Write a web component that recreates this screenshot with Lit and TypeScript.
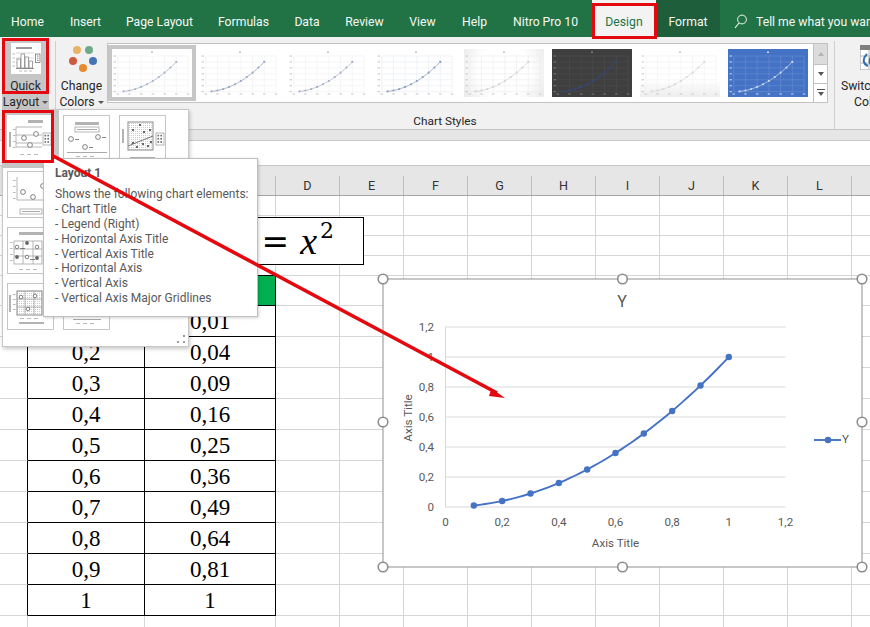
import { LitElement, html, css, svg } from "lit";
import { customElement } from "lit/decorators.js";

const TABS = ["Home", "Insert", "Page Layout", "Formulas", "Data", "Review", "View", "Help", "Nitro Pro 10"];
const COLS = ["", "", "", "D", "E", "F", "G", "H", "I", "J", "K", "L"];
const ROWS: [string, string][] = [
  ["0,1", "0,01"], ["0,2", "0,04"], ["0,3", "0,09"], ["0,4", "0,16"], ["0,5", "0,25"],
  ["0,6", "0,36"], ["0,7", "0,49"], ["0,8", "0,64"], ["0,9", "0,81"], ["1", "1"],
];
const XS = [0.1, 0.2, 0.3, 0.4, 0.5, 0.6, 0.7, 0.8, 0.9, 1];
const TIP = ["- Chart Title", "- Legend (Right)", "- Horizontal Axis Title", "- Vertical Axis Title", "- Horizontal Axis", "- Vertical Axis", "- Vertical Axis Major Gridlines"];

const THUMBS = [
  { cls: "", grid: "#eeeeee", line: "#aebbce", pt: "#a9b7cc", tick: "#c2c2c2" },
  { cls: "", grid: "#eeeeee", line: "#9aaac4", pt: "#9aaac4", tick: "#c2c2c2" },
  { cls: "", grid: "#eeeeee", line: "#b4bfd0", pt: "#a3b0c6", tick: "#c2c2c2" },
  { cls: "", grid: "#e8ebf1", line: "#9aaac8", pt: "#8d9fc0", tick: "#c2c2c2" },
  { cls: "t-soft", grid: "#ebebeb", line: "#d8d8d8", pt: "#d4d4d4", tick: "#c6c6c6" },
  { cls: "t-dark", grid: "#4e4e4e", line: "#31497c", pt: "#31497c", tick: "#7e7e7e" },
  { cls: "t-fade", grid: "#f0f0f0", line: "#dcdcdc", pt: "#d8d8d8", tick: "#c8c8c8" },
  { cls: "t-blue", grid: "#6a8fd2", line: "#b9caeb", pt: "#cbd8f2", tick: "#d0dcf3" },
];

function curve(px: (x: number) => number, py: (y: number) => number) {
  let d = "";
  for (let x = 0.1; x <= 1.0001; x += 0.02) {
    d += `${d ? "L" : "M"}${px(x).toFixed(2)} ${py(x * x).toFixed(2)}`;
  }
  return d;
}

function thumb(t: (typeof THUMBS)[number]) {
  const px = (x: number) => 5.7 + (x / 1.2) * 70.3;
  const py = (y: number) => 42.7 - (y / 1.2) * 35.7;
  const ticks = [0, 0.2, 0.4, 0.6, 0.8, 1, 1.2];
  return svg`<svg class="thumb ${t.cls}" width="80" height="48" viewBox="0 0 80 48">
    <rect x="39" y="2.5" width="2" height="1.5" fill=${t.tick}></rect>
    ${ticks.map((v) => svg`
      <line x1="5.7" x2="76" y1=${py(v)} y2=${py(v)} stroke=${t.grid} stroke-width=".6"></line>
      <line x1=${px(v)} x2=${px(v)} y1="7" y2="42.7" stroke=${t.grid} stroke-width=".6"></line>
      <rect x="1.5" y=${py(v) - 0.5} width="2.5" height="1" fill=${t.tick}></rect>
      <rect x=${px(v) - 1.2} y="44.5" width="2.5" height="1" fill=${t.tick}></rect>`)}
    <path d=${curve(px, py)} fill="none" stroke=${t.line} stroke-width=".9"></path>
    ${XS.map((x) => svg`<circle cx=${px(x)} cy=${py(x * x)} r="1.1" fill=${t.pt}></circle>`)}
  </svg>`;
}

const dash = (x: number, y: number, n = 3, w = 4, g = 3) =>
  Array.from({ length: n }, (_, i) => svg`<rect class="f-m" x=${x + i * (w + g)} y=${y} width=${w} height=".8"></rect>`);
const ticksL = (x: number, y: number, n = 4, g = 6) =>
  Array.from({ length: n }, (_, i) => svg`<rect class="f-m" x=${x} y=${y + i * g} width="2.6" height=".8"></rect>`);
const ring = (x: number, y: number, r = 2.4) => svg`<circle class="ring" cx=${x} cy=${y} r=${r}></circle>`;
const legendBox = (x: number, y: number, w: number, h: number) => svg`
  <rect class="ln" x=${x} y=${y} width=${w} height=${h}></rect>
  ${[0, 1, 2].map((i) => svg`
    <rect class="f-d" x=${x + 1.5} y=${y + 1.8 + i * 3.2} width="1.6" height="1.6"></rect>
    <rect class="f-d" x=${x + 4.4} y=${y + 1.8 + i * 3.2} width="1.6" height="1.6"></rect>`)}`;
const dots = svg`<pattern id="dots" width="2" height="2" patternUnits="userSpaceOnUse"><rect width="1" height="1" fill="#cdcdcd"></rect></pattern>`;

const TILES = [
  svg`<rect class="f-b" x="21" y="5" width="15" height="3"></rect>
    <rect class="f-b" x="2" y="17" width="2" height="15"></rect>
    ${ticksL(6, 14)}
    <path class="ln" d="M9 12H35M9 20H35M9 28H35M9 12V32H35"></path>
    ${ring(17, 23)}${ring(29, 19)}${ring(23, 30)}
    ${legendBox(36, 18, 8, 12)}${dash(13, 39)}`,
  svg`<rect class="f-b" x="12" y="7" width="24" height="3"></rect>
    <rect class="ln" x="12" y="12" width="24" height="5"></rect>
    <rect class="f-m" x="14" y="14" width="20" height="1"></rect>
    ${ring(8, 24)}<rect class="f-d" x="12" y="24" width="4" height=".8"></rect>
    ${ring(35, 22)}<rect class="f-d" x="39" y="22" width="4" height=".8"></rect>
    ${ring(22, 32)}<rect class="f-d" x="26" y="32" width="4" height=".8"></rect>
    <rect class="f-m" x="4" y="37" width="40" height="1"></rect>${dash(13, 41)}`,
  svg`${dots}<rect x="9" y="7" width="25" height="28" fill="url(#dots)" stroke="#8a8a8a"></rect>
    <path d="M9 31L34 21" stroke="#777" fill="none"></path>
    ${[[13, 14], [20, 9], [24, 16], [30, 14], [13, 27], [17, 31], [23, 28], [28, 30], [31, 26]].map(([x, y]) => svg`<rect class="f-d" x=${x} y=${y} width="2" height="2"></rect>`)}
    <rect class="f-b" x="3" y="14" width="2" height="14"></rect>
    ${legendBox(37, 18, 8, 12)}<rect class="f-b" x="11" y="42" width="25" height="3"></rect>`,
  svg`${ticksL(6, 9, 4, 6)}<path class="ln" d="M10 6V29H36"></path>
    ${ring(16, 21)}${ring(26, 26)}${ring(36, 15)}
    <rect class="ln" x="13" y="38" width="22" height="5"></rect><rect class="f-m" x="15" y="40" width="18" height="1"></rect>`,
  svg``,
  svg``,
  svg`<rect class="f-b" x="12" y="5" width="25" height="3"></rect>
    ${ticksL(3, 15, 4, 6)}
    <rect class="ln" x="7" y="14" width="28" height="23"></rect>
    <path class="ln" d="M7 22H35M7 29H35M16 14V37M26 14V37"></path>
    ${ring(10, 20, 1.8)}${ring(30, 20, 1.8)}${ring(20, 30, 1.8)}
    <circle class="f-d" cx="20" cy="16" r="1.9"></circle><circle class="f-d" cx="10" cy="30" r="1.9"></circle><circle class="f-d" cx="30" cy="31" r="1.9"></circle>
    <rect class="f-d" x="13" y="21" width="5" height=".8"></rect><rect class="f-d" x="23" y="32" width="5" height=".8"></rect>
    ${dash(12, 42)}`,
  svg``,
  svg``,
  svg`${dots}<rect class="f-b" x="2" y="12" width="2" height="17"></rect>
    ${ticksL(6, 11, 4, 5)}
    <rect x="10" y="8" width="25" height="24" fill="url(#dots)" stroke="#8a8a8a"></rect>
    <path class="ln" d="M10 16H35M10 24H35M18 8V32M27 8V32"></path>
    ${ring(14, 14, 1.8)}${ring(28, 13, 1.8)}${ring(21, 26, 1.8)}
    ${dash(13, 35)}<rect class="f-b" x="12" y="39" width="25" height="2"></rect>`,
  svg`${dash(13, 40)}<rect class="f-m" x="10" y="36" width="28" height="1"></rect>`,
];

@customElement("app-root")
export class AppRoot extends LitElement {
  static styles = css`
    :host {
      display: block; position: relative; width: 870px; height: 627px; overflow: hidden;
      font-family: Roboto, "Open Sans", "Liberation Sans", sans-serif; background: #fff; color: #262626;
    }
    .tabs {
      height: 37px; background: #217346; color: #f4f8f5; font-size: 12.2px;
      display: grid; grid-template-columns: 55px 61px 87px 81px 46px 69px 47px 57px 85px 4px 64px 64px 1fr;
      align-items: stretch;
    }
    .tab { display: flex; align-items: center; justify-content: center; padding-top: 6px; white-space: nowrap; }
    .ctx { background: #1e5e3a; }
    .design { background: #f3f3f3; color: #217346; position: relative; }
    .design::after {
      content: ""; position: absolute; left: 0; right: -1px; top: 3px; bottom: -2px;
      border: 3px solid #e3090e; box-sizing: border-box;
    }
    .search { display: flex; align-items: center; gap: 9px; padding: 6px 0 0 14px; white-space: nowrap; font-size: 12.2px; }
    .ribbon {
      height: 93px; box-sizing: border-box; background: #f1f1f1; border-bottom: 1px solid #c4c4c4;
      display: flex; align-items: flex-start; font-size: 12.2px; color: #262626;
    }
    .chartlayouts { width: 53px; margin-left: 2px; flex: none; height: 92px; }
    .quick {
      position: relative; width: 47px; height: 71px; margin-top: 1px; box-sizing: border-box; padding-top: 5px;
      background: #c6c6c6; display: flex; flex-direction: column; align-items: center;
    }
    .quick::after {
      content: ""; position: absolute; left: 0; right: 0; top: 0; height: 56px; box-sizing: border-box;
      border: 3px solid #e3090e;
    }
    .icontile { width: 30px; height: 31px; flex: none; display: block; background: #fff; }
    .quick .icontile { margin-bottom: 4px; }
    .lbl { line-height: 16px; height: 16px; white-space: nowrap; text-align: center; }
    .caret {
      display: inline-block; width: 0; height: 0; margin-left: 3px; vertical-align: 2px;
      border-left: 3px solid transparent; border-right: 3px solid transparent; border-top: 3px solid #555;
    }
    .styles {
      flex: none; width: 780px; height: 88px; margin-top: 4px; box-sizing: border-box;
      border-left: 1px solid #d0d0d0; border-right: 1px solid #d0d0d0;
      display: flex; flex-direction: column;
    }
    .stylesrow { height: 70px; margin-top: 2px; display: flex; align-items: flex-start; }
    .colors { width: 51px; flex: none; display: flex; flex-direction: column; align-items: center; }
    .colors svg { display: block; }
    .gallery {
      flex: none; width: 706px; height: 60px; box-sizing: border-box; display: flex; padding-top: 1px;
      background: #fff; border: 1px solid #c2c2c2; border-width: 1px 0 1px 1px;
    }
    .cell { width: 88px; height: 56px; box-sizing: border-box; padding: 4px; }
    .cell.sel { background: #c6c6c6; }
    .thumb { display: block; background: #fff; }
    .t-soft { background: radial-gradient(circle at 50% 45%, #fff 55%, #eaeaea 100%); }
    .t-dark { background: #3f3f3f; }
    .t-fade { background: linear-gradient(#fff 65%, #ededed 100%); }
    .t-blue { background: #4472c4; }
    .scroll { width: 15px; flex: none; height: 60px; display: flex; flex-direction: column; box-sizing: border-box; border: 1px solid #c2c2c2; background: #fff; }
    .scroll div { flex: 1; display: flex; align-items: center; justify-content: center; flex-direction: column; gap: 2px; border-bottom: 1px solid #c2c2c2; }
    .scroll div:first-child { background: #dcdcdc; flex: 1.1; }
    .scroll div:last-child { border-bottom: 0; }
    .up { width: 0; height: 0; border: 3.5px solid transparent; border-top: 0; border-bottom: 4px solid #b4b4b4; }
    .down { width: 0; height: 0; border: 3.5px solid transparent; border-bottom: 0; border-top: 4px solid #555; }
    .bar { width: 8px; height: 1px; background: #555; }
    .grouplabel { text-align: center; line-height: 16px; font-size: 11.8px; }
    .switch { flex: none; width: 66px; margin-left: 7px; display: flex; flex-direction: column; align-items: center; padding-top: 8px; }
    .switch svg { display: block; margin-bottom: 8px; }
    .strip { height: 10px; background: #e6e6e6; border-bottom: 1px solid #c8c8c8; }
    .formula { height: 24px; background: #fff; border-bottom: 1px solid #c8c8c8; }
    .colhead {
      height: 30px; box-sizing: border-box; background: #e6e6e6; border-bottom: 1px solid #a6a6a6;
      display: grid; grid-template-columns: 28px 117px 131px repeat(9, 64px) 1fr; font-size: 12.6px; color: #333;
    }
    .colhead div { display: flex; align-items: flex-end; justify-content: center; height: 19px; margin-top: 10px; line-height: 17px; border-right: 1px solid #bdbdbd; padding-bottom: 1px; box-sizing: border-box; }
    .colhead div:last-child { border-right: 0; }
    .sheet {
      display: grid; grid-template-columns: 28px 117px 131px repeat(9, 64px) 19px;
      grid-template-rows: repeat(4, 20px) 30px repeat(11, 31px);
      font-family: "Liberation Serif", "Times New Roman", serif; font-size: 23px; color: #000;
    }
    .c {
      box-sizing: border-box; border-right: 1px solid #d6d6d6; border-bottom: 1px solid #d6d6d6;
      display: flex; align-items: center; justify-content: center; line-height: 1;
    }
    .c.br { border-right-color: #000; }
    .c.bb { border-bottom-color: #000; }
    .c.green { background: #00b050; }
    .eq {
      position: absolute; left: 200px; top: 217px; width: 164px; height: 48px; box-sizing: border-box;
      background: #fff; border: 1px solid #000; display: flex; justify-content: flex-end; align-items: center;
      padding: 0 29px 0 0; font-family: "DejaVu Serif", "Liberation Serif", serif; font-size: 33px; color: #000; white-space: nowrap;
    }
    .eq i { margin-left: 11px; font-family: "Liberation Serif", serif; font-size: 38px; line-height: 1; }
    .eq sup { font-size: 22px; line-height: 0; margin-left: 3px; position: relative; top: -10px; font-family: "DejaVu Serif", serif; }
    .chart { position: absolute; left: 375px; top: 270px; display: block; }
    .chart text { font-family: Roboto, "Open Sans", sans-serif; fill: #595959; font-size: 11.6px; }
    .chart .title { font-size: 16px; }
    .handle { fill: #fff; stroke: #8c8c8c; stroke-width: 1.6; }
    .popup {
      position: absolute; left: 2px; top: 109px; width: 187px; height: 238px; box-sizing: border-box; background: #fff;
      border: 1px solid #c8c8c8; box-shadow: 1px 2px 4px rgba(0,0,0,.22);
      padding: 5px 0 0 4px; display: grid; grid-template-columns: repeat(3, 47px); grid-auto-rows: 47px; column-gap: 9px; row-gap: 9px;
    }
    .tile { position: relative; box-sizing: border-box; border: 1px solid #c6c6c6; background: #fff; }
    .tile svg { position: absolute; left: -1px; top: -1px; display: block; }
    .tile.on { border-color: transparent; }
    .tile.on::before { content: ""; position: absolute; left: -6px; top: -6px; right: -6px; bottom: -7px; background: #c6c6c6; z-index: 0; }
    .tile.on::after { content: ""; position: absolute; left: -6px; top: -6px; right: -1px; bottom: -2px; border: 3px solid #e3090e; box-sizing: border-box; z-index: 2; }
    .tile.on svg { z-index: 1; background: #fff; }
    .grip { position: absolute; right: 3px; bottom: 3px; display: block; }
    .ln { fill: none; stroke: #a3a3a3; stroke-width: .8; }
    .f-b { fill: #b3b3b3; }
    .f-m { fill: #a9a9a9; }
    .f-d { fill: #666; }
    .ring { fill: #fff; stroke: #666; stroke-width: .8; }
    .tip {
      position: absolute; left: 43px; top: 158px; width: 215px; height: 159px; box-sizing: border-box; padding: 7px 0 0 11px;
      background: #fff; border: 1px solid #bfbfbf; box-shadow: 1px 1px 3px rgba(0,0,0,.18);
      color: #595959; font-size: 12px; line-height: 14.9px; white-space: nowrap;
    }
    .tip b { display: block; font-weight: 700; margin-bottom: 6px; }
    .arrow { position: absolute; left: 0; top: 0; display: block; pointer-events: none; }
  `;

  private chart() {
    const px = (x: number) => 445.5 + (x / 1.2) * 340;
    const py = (y: number) => 507 - (y / 1.2) * 180;
    const ylabels = ["0", "0,2", "0,4", "0,6", "0,8", "1", "1,2"];
    const handles = [[383, 279], [622.5, 279], [862, 279], [383, 422], [862, 422], [383, 567], [622.5, 567], [862, 567]];
    return html`<svg class="chart" width="495" height="305" viewBox="375 270 495 305">
      <rect x="383" y="279" width="479" height="288" fill="#fff" stroke="#8f8f8f" stroke-width="1"></rect>
      <text class="title" x="622" y="307" text-anchor="middle">Y</text>
      ${ylabels.map((l, i) => {
        const v = i * 0.2;
        return svg`
          <line x1="445.5" x2="785.5" y1=${py(v)} y2=${py(v)} stroke="#d9d9d9"></line>
          <text x="434" y=${py(v) + 4} text-anchor="end">${l}</text>
          <text x=${px(v)} y="526" text-anchor="middle">${l}</text>`;
      })}
      <line x1="445.5" x2="445.5" y1="327" y2="507" stroke="#d9d9d9"></line>
      <text x="615.5" y="547" text-anchor="middle">Axis Title</text>
      <text transform="translate(412 418) rotate(-90)" text-anchor="middle">Axis Title</text>
      <path d=${curve(px, py)} fill="none" stroke="#4472c4" stroke-width="1.9"></path>
      ${XS.map((x) => svg`<circle cx=${px(x)} cy=${py(x * x)} r="3.2" fill="#4472c4"></circle>`)}
      <line x1="814" x2="841" y1="440" y2="440" stroke="#4472c4" stroke-width="1.9"></line>
      <circle cx="828" cy="440" r="3.2" fill="#4472c4"></circle>
      <text x="842" y="443">Y</text>
      ${handles.map(([x, y]) => svg`<circle class="handle" cx=${x} cy=${y} r="4.8"></circle>`)}
    </svg>`;
  }

  private cells() {
    const out: unknown[] = [];
    for (let r = 0; r < 16; r++) {
      for (let c = 0; c < 13; c++) {
        const inTable = r >= 4 && r <= 14;
        const br = inTable && c <= 2;
        const bb = r >= 3 && r <= 14 && (c === 1 || c === 2);
        const green = r === 4 && (c === 1 || c === 2);
        let text = "";
        if (r >= 5 && r <= 14 && (c === 1 || c === 2)) text = ROWS[r - 5][c - 1];
        out.push(html`<div class="c ${br ? "br" : ""} ${bb ? "bb" : ""} ${green ? "green" : ""}">${text}</div>`);
      }
    }
    return out;
  }

  render() {
    return html`
      <div class="tabs">
        ${TABS.map((t) => html`<div class="tab">${t}</div>`)}
        <div></div>
        <div class="tab design">Design</div>
        <div class="tab ctx">Format</div>
        <div class="search">
          <svg width="13" height="15" viewBox="0 0 13 15"><circle cx="8" cy="5.5" r="4.4" fill="none" stroke="#f4f8f5" stroke-width="1"></circle><path d="M5 9L1 14" stroke="#f4f8f5" stroke-width="1.2" fill="none"></path></svg>
          <span>Tell me what you want to do</span>
        </div>
      </div>

      <div class="ribbon">
        <div class="chartlayouts">
          <div class="quick">
            <svg class="icontile" viewBox="0 0 30 31">
              <rect x="5" y="4" width="16" height="2" fill="#9a9a9a"></rect>
              <path d="M1.5 11h2.5M1.5 15h2.5M1.5 19h2.5M1.5 23h2.5" stroke="#a8a8a8" stroke-width=".8"></path>
              <path d="M5 10H23M5 15H23M5 20H23" stroke="#c8c8c8" stroke-width=".7"></path>
              <rect x="6" y="16" width="3.4" height="9" fill="#fff" stroke="#8a8a8a" stroke-width=".8"></rect>
              <rect x="10" y="11" width="3.4" height="14" fill="#fff" stroke="#8a8a8a" stroke-width=".8"></rect>
              <rect x="14" y="14" width="3.4" height="11" fill="#fff" stroke="#8a8a8a" stroke-width=".8"></rect>
              <rect x="18" y="18" width="3.4" height="7" fill="#fff" stroke="#8a8a8a" stroke-width=".8"></rect>
              <path d="M5 25.5H23" stroke="#777" stroke-width=".8"></path>
              <rect x="24.5" y="11" width="4.5" height="8.5" fill="#fff" stroke="#777" stroke-width=".8"></rect>
              <path d="M26 13h1.5M26 15.2h1.5M26 17.4h1.5" stroke="#666" stroke-width=".8"></path>
              <path d="M8 28h3M13 28h3M18 28h3" stroke="#a8a8a8" stroke-width=".8"></path>
            </svg>
            <div class="lbl">Quick</div>
            <div class="lbl">Layout<span class="caret"></span></div>
          </div>
        </div>
        <div class="styles">
          <div class="stylesrow">
            <div class="colors">
              <svg width="51" height="35" viewBox="55 43 51 35">
                <circle cx="76" cy="50" r="4" fill="#e9b269"></circle>
                <circle cx="88" cy="50" r="4" fill="#6fa98c"></circle>
                <circle cx="72" cy="61" r="4" fill="#cf5a3e"></circle>
                <circle cx="92" cy="61" r="4" fill="#4575b5"></circle>
                <circle cx="82" cy="68" r="4" fill="#e88a30"></circle>
              </svg>
              <div class="lbl">Change</div>
              <div class="lbl">Colors<span class="caret"></span></div>
            </div>
            <div class="gallery">
              ${THUMBS.map((t, i) => html`<div class="cell ${i === 0 ? "sel" : ""}">${thumb(t)}</div>`)}
            </div>
            <div class="scroll">
              <div><span class="up"></span></div>
              <div><span class="down"></span></div>
              <div><span class="bar"></span><span class="down"></span></div>
            </div>
          </div>
          <div class="grouplabel">Chart Styles</div>
        </div>
        <div class="switch">
          <svg width="30" height="25" viewBox="0 0 30 25">
            <rect x="0" y="0" width="30" height="25" fill="#fff" stroke="#9a9a9a"></rect>
            <rect x="0" y="0" width="30" height="5" fill="#7f7f7f"></rect>
            <path d="M0 11H30M0 18H30M9 5V25" stroke="#b5b5b5"></path>
            <path d="M7 9C2 14 3 19 8 21M12 10c-3 4-3 8 0 11" fill="none" stroke="#2f6fb5" stroke-width="2"></path>
          </svg>
          <div class="lbl">Switch Row/</div>
          <div class="lbl">Column</div>
        </div>
      </div>
      <div class="strip"></div>
      <div class="formula"></div>
      <div class="colhead">${COLS.map((c) => html`<div>${c}</div>`)}<div></div></div>
      <div class="sheet">${this.cells()}</div>

      <div class="eq">=<i>x</i><sup>2</sup></div>
      ${this.chart()}

      <div class="popup">
        ${TILES.map((t, i) => html`<div class="tile ${i === 0 ? "on" : ""}"><svg width="47" height="47" viewBox="0 0 47 47">${t}</svg></div>`)}
        <svg class="grip" width="8" height="8" viewBox="0 0 8 8" fill="#9a9a9a"><rect x="6" y="0" width="2" height="2"></rect><rect x="6" y="6" width="2" height="2"></rect><rect x="0" y="6" width="2" height="2"></rect></svg>
      </div>
      <div class="tip">
        <b>Layout 1</b>
        <div>Shows the following chart elements:</div>
        ${TIP.map((l) => html`<div>${l}</div>`)}
      </div>
      <svg class="arrow" width="870" height="627" viewBox="0 0 870 627">
        <path d="M42 150L497 393" stroke="#e3090e" stroke-width="3.6" fill="none"></path>
        <path d="M505 398L491.5 388.5L489 396Z" fill="#e3090e"></path>
      </svg>
    `;
  }
}
